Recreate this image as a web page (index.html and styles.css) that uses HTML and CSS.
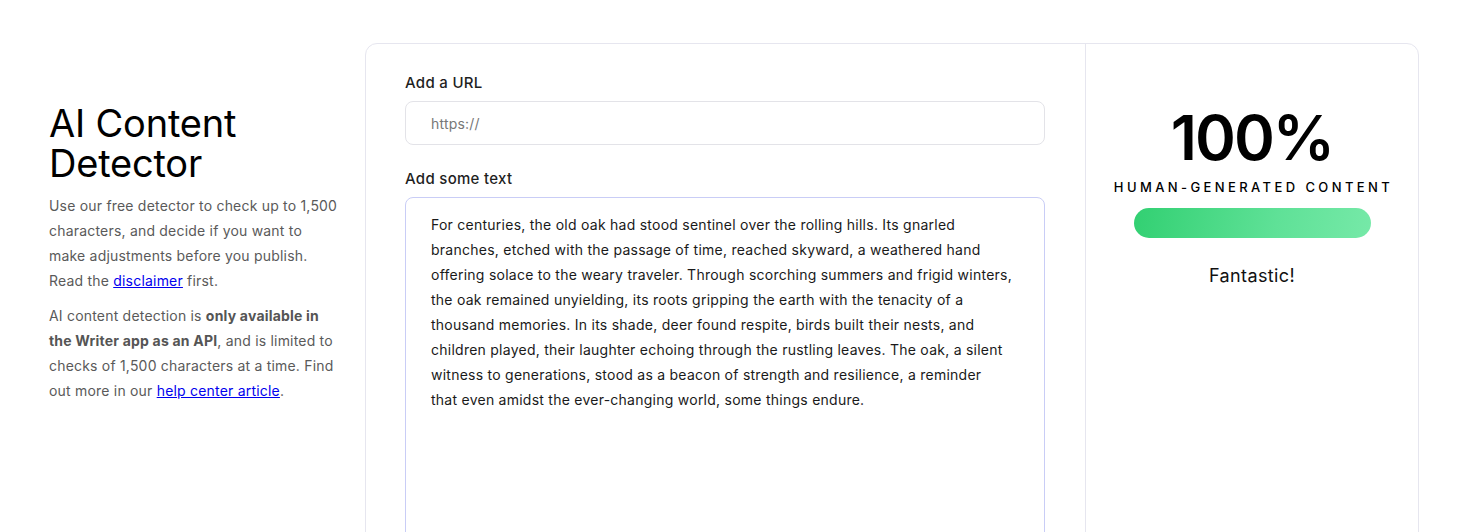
FILE: index.html
```html
<!DOCTYPE html>
<html lang="en">
<head>
    <meta charset="UTF-8">
    <meta name="viewport" content="width=device-width, initial-scale=1.0">
    <title>AI Content Detector</title>
    <link rel="stylesheet" href="styles.css">
</head>
<body>
    <div id="main">
        <div class="intro">
            <h1>AI Content Detector</h1>
            <p>Use our free detector to check up to 1,500 characters, and decide if you want to make adjustments before you publish. Read the <a href="#">disclaimer</a> first.</p>
            <p>AI content detection is <b>only available in the Writer app as an API</b>, and is limited to checks of 1,500 characters at a time. Find out more in our <a href="#">help center article</a>.</p>
        </div>
        <div class="card">
            <div class="inputs">
                <label for="url">Add a URL</label>
                <input id="url" type="text" placeholder="https://">
                <label for="text" class="text-label">Add some text</label>
                <textarea id="text">For centuries, the old oak had stood sentinel over the rolling hills. Its gnarled
branches, etched with the passage of time, reached skyward, a weathered hand
offering solace to the weary traveler. Through scorching summers and frigid winters,
the oak remained unyielding, its roots gripping the earth with the tenacity of a
thousand memories. In its shade, deer found respite, birds built their nests, and
children played, their laughter echoing through the rustling leaves. The oak, a silent
witness to generations, stood as a beacon of strength and resilience, a reminder
that even amidst the ever-changing world, some things endure.</textarea>
            </div>
            <div class="result">
                <div class="score">100%</div>
                <div class="score-label">HUMAN-GENERATED CONTENT</div>
                <div class="bar"></div>
                <div class="verdict">Fantastic!</div>
            </div>
        </div>
    </div>
</body>
</html>
```
FILE: styles.css
```css
body {
    font-family: 'Inter', 'Open Sans', sans-serif;
    background-color: #fff;
    margin: 0;
    padding: 0;
    color: #222;
}

#main {
    display: flex;
    align-items: flex-start;
    padding: 43px 41px 0 49px;
}

.intro {
    width: 290px;
    flex-shrink: 0;
    padding-top: 60px;
    margin-right: 26px;
}

h1 {
    font-size: 38px;
    font-weight: 400;
    line-height: 40px;
    margin: 0 0 10px;
    color: #000;
    letter-spacing: -0.2px;
}

.intro p {
    font-size: 14px;
    line-height: 25px;
    color: #5a5a5a;
    letter-spacing: 0.2px;
    margin: 0 0 10px;
}

.intro b {
    font-weight: 700;
    color: #555;
}

.intro a {
    color: #0000ee;
}

.card {
    flex: 1;
    display: flex;
    border: 1px solid #e6e6ef;
    border-radius: 12px;
    height: 500px;
}

.inputs {
    width: 640px;
    padding: 28px 40px 0 39px;
}

label {
    display: block;
    font-size: 15px;
    font-weight: 500;
    line-height: 22px;
    letter-spacing: 0.3px;
    margin-bottom: 7px;
    color: #1f1f1f;
}

.text-label {
    margin-top: 23px;
}

input[type="text"] {
    display: block;
    width: 100%;
    height: 44px;
    box-sizing: border-box;
    border: 1px solid #e3e3e8;
    border-radius: 8px;
    padding: 0 25px;
    font-family: inherit;
    font-size: 14px;
    letter-spacing: 0.2px;
    color: #222;
    outline: none;
}

input::placeholder {
    color: #777;
}

textarea {
    display: block;
    width: 100%;
    height: 400px;
    box-sizing: border-box;
    border: 1px solid #c9cdf6;
    border-radius: 8px;
    padding: 14px 25px;
    font-family: inherit;
    font-size: 14px;
    line-height: 25px;
    letter-spacing: 0.25px;
    color: #1a1a1a;
    resize: none;
    outline: none;
}

.result {
    flex: 1;
    border-left: 1px solid #e6e6ef;
    display: flex;
    flex-direction: column;
    align-items: center;
    padding-top: 58px;
}

.score {
    font-size: 62px;
    font-weight: 600;
    line-height: 72px;
    letter-spacing: -2px;
    color: #000;
}

.score-label {
    font-size: 13px;
    font-weight: 500;
    letter-spacing: 3.4px;
    margin-top: 5px;
    margin-left: 3px;
    color: #000;
}

.bar {
    width: 237px;
    height: 30px;
    border-radius: 15px;
    margin-top: 13px;
    background: linear-gradient(100deg, #32d072 0%, #5fe197 60%, #76e9a8 100%);
}

.verdict {
    font-size: 18px;
    letter-spacing: 0.4px;
    margin-top: 27px;
    color: #111;
}
```
